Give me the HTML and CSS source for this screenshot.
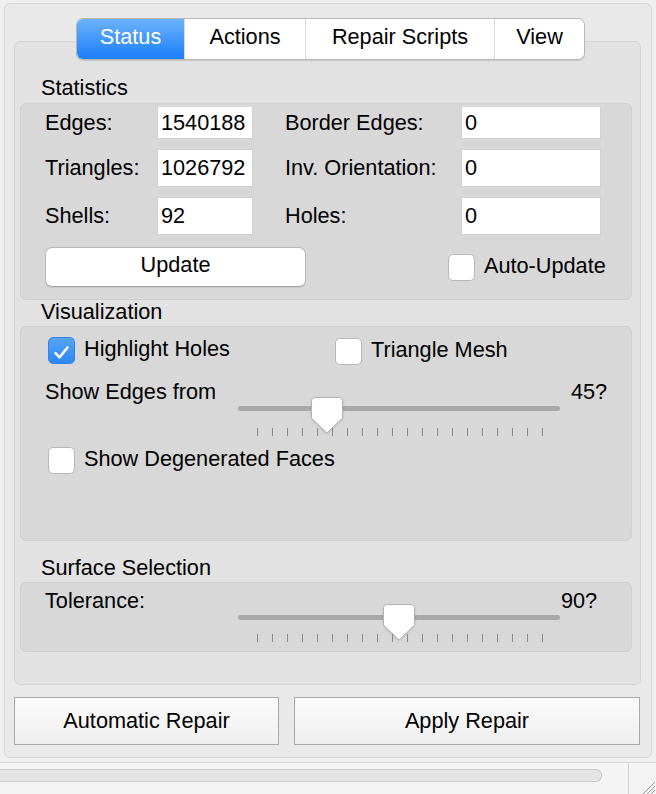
FILE: index.html
```html
<!DOCTYPE html>
<html>
<head>
<meta charset="utf-8">
<link rel="stylesheet" href="styles.css">
</head>
<body>
<div class="outer">
  <div class="tabs">
    <div class="tab tab-status active">Status</div>
    <div class="tab tab-actions">Actions</div>
    <div class="tab tab-scripts">Repair Scripts</div>
    <div class="tab tab-view">View</div>
  </div>
  <div class="pane">
    <div class="glabel">Statistics</div>
    <div class="group stats">
      <div class="grid">
        <span class="lbl">Edges:</span><span class="field first">1540188</span><span class="lbl lbl2">Border Edges:</span><span class="field first">0</span>
        <span class="lbl">Triangles:</span><span class="field">1026792</span><span class="lbl lbl2">Inv. Orientation:</span><span class="field">0</span>
        <span class="lbl">Shells:</span><span class="field">92</span><span class="lbl lbl2">Holes:</span><span class="field">0</span>
      </div>
      <div class="btnrow">
        <div class="pushbtn">Update</div>
        <div class="check autoupd"><span class="box"></span><span class="ctext">Auto-Update</span></div>
      </div>
    </div>

    <div class="glabel gl-vis">Visualization</div>
    <div class="group vis">
      <div class="checks">
        <div class="check"><span class="box on"><svg width="17" height="15" viewBox="0 0 17 15"><path d="M2.5 8.2 L6.6 12.3 L14.5 2.5" fill="none" stroke="#fff" stroke-width="2.6" stroke-linecap="round" stroke-linejoin="round"/></svg></span><span class="ctext">Highlight Holes</span></div>
        <div class="check tri"><span class="box"></span><span class="ctext">Triangle Mesh</span></div>
      </div>
      <div class="sliderrow">
        <span class="slabel">Show Edges from</span>
        <div class="slider">
          <div class="track"></div>
          <div class="ticks"><i></i><i></i><i></i><i></i><i></i><i></i><i></i><i></i><i></i><i></i><i></i><i></i><i></i><i></i><i></i><i></i><i></i><i></i><i></i><i></i></div>
          <svg class="thumb" style="left:73px" width="34" height="39" viewBox="0 0 34 39"><path d="M5 1.5 H29 Q32.5 1.5 32.5 5 V22 L17 37 L1.5 22 V5 Q1.5 1.5 5 1.5 Z" fill="#fff" stroke="#b3b3b3" stroke-width="1"/></svg>
        </div>
        <span class="sval v45">45?</span>
      </div>
      <div class="check degen"><span class="box"></span><span class="ctext">Show Degenerated Faces</span></div>
    </div>

    <div class="glabel gl-surf">Surface Selection</div>
    <div class="group surf">
      <div class="sliderrow">
        <span class="slabel">Tolerance:</span>
        <div class="slider">
          <div class="track"></div>
          <div class="ticks"><i></i><i></i><i></i><i></i><i></i><i></i><i></i><i></i><i></i><i></i><i></i><i></i><i></i><i></i><i></i><i></i><i></i><i></i><i></i><i></i></div>
          <svg class="thumb" style="left:145px" width="34" height="39" viewBox="0 0 34 39"><path d="M5 1.5 H29 Q32.5 1.5 32.5 5 V22 L17 37 L1.5 22 V5 Q1.5 1.5 5 1.5 Z" fill="#fff" stroke="#b3b3b3" stroke-width="1"/></svg>
        </div>
        <span class="sval v90">90?</span>
      </div>
    </div>
  </div>
  <div class="actions">
    <div class="bigbtn auto">Automatic Repair</div>
    <div class="bigbtn apply">Apply Repair</div>
  </div>
</div>
<div class="statusbar">
  <div class="hscroll"></div>
  <div class="gripcell">
    <svg width="18" height="18" viewBox="0 0 18 18"><path d="M17 5 L5 17 M17 9 L9 17 M17 13 L13 17" stroke="#9a9a9a" stroke-width="1" fill="none"/></svg>
  </div>
</div>
</body>
</html>
```

FILE: styles.css
```css
* { box-sizing: border-box; }
html, body { margin: 0; padding: 0; }
body {
  width: 656px;
  height: 794px;
  overflow: hidden;
  background: #efefef;
  font-family: "Liberation Sans", Arial, sans-serif;
  font-size: 21.7px;
  color: #000;
  padding-top: 3px;
}
.outer {
  margin-left: 4px;
  width: 648px;
  border: 1px solid #d6d6d6;
  border-radius: 6px;
  background: #e9e9e9;
  padding: 0 10px 12px 9px;
}
.tabs {
  position: relative;
  z-index: 1;
  display: flex;
  width: 509px;
  height: 42px;
  margin: 14px 0 0 62px;
  border: 1px solid #b7b7b7;
  border-radius: 7px;
  background: #fff;
  overflow: hidden;
  box-shadow: 0 1px 1px rgba(0,0,0,0.12);
}
.tab {
  height: 40px;
  line-height: 36px;
  text-align: center;
  border-left: 1px solid #d9d9d9;
}
.tab-status { width: 107px; border-left: none; }
.tab-actions { width: 121px; }
.tab-scripts { width: 189px; }
.tab-view { width: 90px; }
.tab.active {
  color: #fff;
  background: linear-gradient(#6cb2fa, #1a7ffa);
}
.pane {
  margin-top: -19px;
  width: 627px;
  border: 1px solid #d3d3d3;
  border-radius: 6px;
  background: #e2e2e2;
  padding: 35px 8px 32px 5px;
}
.glabel {
  height: 22px;
  line-height: 22px;
  margin: 0 0 4px 21px;
}
.gl-vis { margin: 1px 0 3px 21px; }
.gl-surf { margin: 16px 0 3px 21px; }
.group {
  width: 612px;
  border: 1px solid #cfcfcf;
  border-radius: 6px;
  background: #d8d8d8;
}
.stats { padding: 3px 0 12px 24px; }
.grid {
  display: grid;
  grid-template-columns: 112px 96px 208px 140px;
  grid-template-rows: 32px 38px 38px;
  row-gap: 10px;
  align-items: center;
}
.lbl { line-height: 22px; }
.lbl2 { padding-left: 32px; }
.field {
  height: 38px;
  line-height: 36px;
  background: #fff;
  border: 1px solid #d0d0d0;
  padding-left: 3px;
}
.field.first { height: 32px; line-height: 32px; border-top: none; }
.btnrow {
  display: flex;
  align-items: center;
  margin-top: 12px;
  height: 40px;
}
.pushbtn {
  width: 261px;
  height: 40px;
  line-height: 34px;
  text-align: center;
  background: #fff;
  border: 1px solid #b9b9b9;
  border-bottom-color: #a5a5a5;
  border-radius: 7px;
  box-shadow: 0 1px 0 rgba(0,0,0,0.06);
}
.check {
  display: flex;
  align-items: center;
  line-height: 22px;
}
.ctext { padding-bottom: 3px; }
.box {
  width: 27px;
  height: 27px;
  flex: none;
  background: #fff;
  border: 1px solid #b8b8b8;
  border-radius: 5px;
  margin-right: 9px;
  display: flex;
  align-items: center;
  justify-content: center;
}
.box.on {
  background: linear-gradient(#56a5f8, #2d86f3);
  border-color: #3384ea;
}
.box.on svg { margin: 3px 1px 0 0; }
.autoupd { margin-left: 142px; }
.vis { padding: 10px 0 66px 27px; }
.checks {
  display: flex;
  height: 27px;
  align-items: center;
}
.checks .check:first-child { width: 287px; }
.tri { position: relative; top: 1px; }
.sliderrow {
  display: grid;
  grid-template-columns: 193px 322px auto;
  align-items: start;
}
.vis .sliderrow { margin: 17px 0 0 -3px; }
.slabel, .sval { line-height: 22px; }
.v45 { margin-left: 11px; }
.v90 { margin-left: 1px; }
.slider {
  position: relative;
  height: 56px;
}
.track {
  position: absolute;
  left: 0;
  right: 0;
  top: 25px;
  height: 5px;
  border-radius: 3px;
  background: #a8a8a8;
}
.ticks {
  position: absolute;
  left: 19px;
  width: 286px;
  top: 47px;
  height: 8px;
  display: flex;
  justify-content: space-between;
}
.surf .ticks { top: 44px; }
.ticks i {
  display: block;
  width: 1px;
  height: 8px;
  background: #8a8a8a;
}
.thumb {
  position: absolute;
  top: 15px;
  margin-left: -1px;
  filter: drop-shadow(0 1px 1px rgba(0,0,0,0.12));
}
.surf .thumb { top: 13px; }
.degen { margin-top: 10px; }
.surf { padding: 7px 0 5px 24px; }
.actions {
  display: flex;
  gap: 15px;
  margin-top: 12px;
}
.bigbtn {
  height: 48px;
  line-height: 46px;
  text-align: center;
  border: 1px solid #a9a9a9;
  background: linear-gradient(#fbfbfb, #efefef);
}
.auto { width: 265px; }
.apply { width: 346px; }
.statusbar {
  display: flex;
  margin-top: 4px;
  height: 33px;
  border-top: 1px solid #dadada;
  background: #f4f4f4;
}
.hscroll {
  width: 602px;
  height: 13px;
  margin-top: 6px;
  border: 1px solid #cbcbcb;
  border-left: none;
  border-radius: 0 6px 6px 0;
  background: #e4e4e4;
}
.gripcell {
  margin-left: 26px;
  flex: 1;
  border-left: 1px solid #d6d6d6;
  display: flex;
  align-items: flex-end;
  justify-content: flex-end;
}
.gripcell svg { display: block; }
```
